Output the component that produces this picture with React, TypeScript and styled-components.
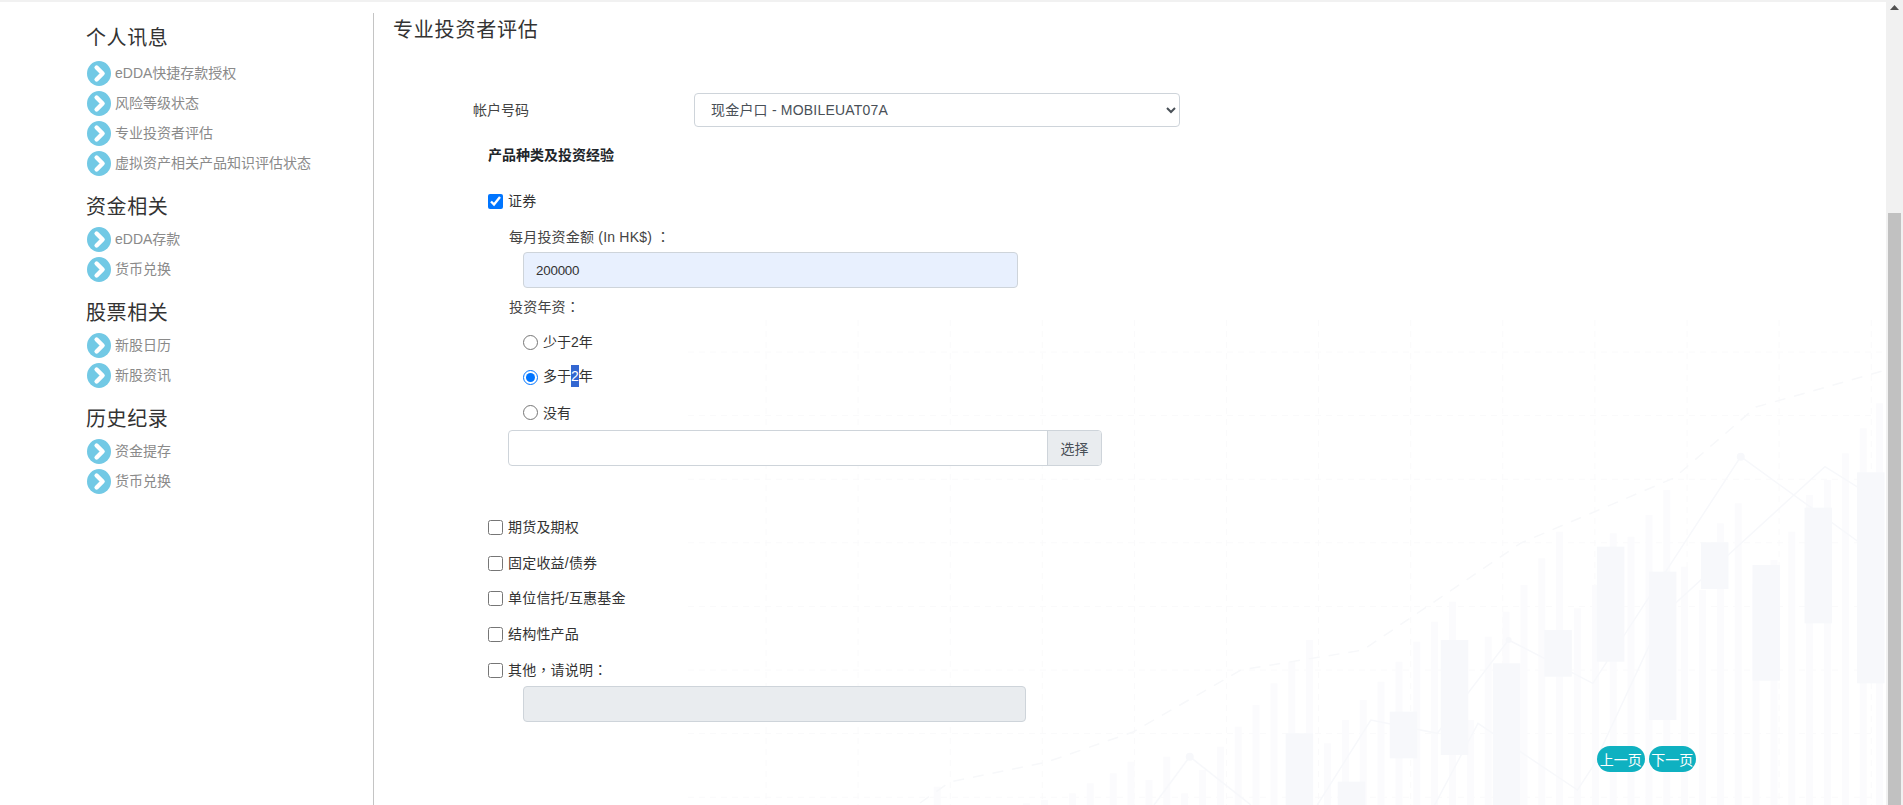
import React from "react";
import styled, { createGlobalStyle } from "styled-components";

const Global = createGlobalStyle`
  html, body { margin: 0; padding: 0; background: #fff; height: 100%; overflow: hidden; }
  * { box-sizing: border-box; }
  body { font-family: "Liberation Sans", "Noto Sans CJK SC", sans-serif; }
`;

const Page = styled.div`
  display: flex;
  width: 1903px;
  height: 805px;
  overflow: hidden;
`;
const Stage = styled.div`
  position: relative;
  flex: 1;
  min-width: 0;
  display: flex;
  flex-direction: column;
`;
const TopLine = styled.div`
  height: 2px;
  background: #f1f1f1;
  position: relative;
  z-index: 1;
`;
const Columns = styled.div`
  position: relative;
  z-index: 1;
  flex: 1;
  display: flex;
  min-height: 0;
`;
const ChartLayer = styled.svg`
  position: absolute;
  left: 0;
  top: 0;
  width: 1886px;
  height: 805px;
  pointer-events: none;
`;
const Sidebar = styled.nav`
  width: 373px;
  flex: none;
  padding: 21px 0 0 86px;
`;
const MenuHeading = styled.h3`
  margin: 0 0 3px;
  height: 30px;
  line-height: 30px;
  font-size: 20px;
  font-weight: 400;
  letter-spacing: 0.6px;
  color: #333;
`;
const MenuGroup = styled.section`
  margin-bottom: 13px;
  &:first-child {
    margin-bottom: 13.5px;
  }
  &:first-child ${MenuHeading} {
    margin-bottom: 5px;
  }
`;
const MenuItem = styled.a`
  display: flex;
  align-items: center;
  height: 30px;
  padding-left: 1px;
  gap: 4px;
  font-size: 14px;
  color: #8a8a8a;
  span {
    padding-bottom: 3px;
  }
`;
const Main = styled.main`
  flex: 1;
  margin-top: 11px;
  border-left: 1px solid #c4c4c4;
  padding-top: 2px;
`;
const Title = styled.h2`
  margin: 0 0 0 19px;
  height: 30px;
  line-height: 30px;
  font-size: 20px;
  font-weight: 400;
  letter-spacing: 0.8px;
  color: #333;
`;
const AccountRow = styled.div`
  display: flex;
  align-items: center;
  margin: 48px 0 0 99px;
  height: 34px;
`;
const AccountLabel = styled.label`
  width: 221px;
  font-size: 14px;
  color: #444;
  padding-bottom: 2px;
`;
const AccountSelect = styled.select`
  width: 486px;
  height: 34px;
  padding: 0 12px;
  font: 14px "Liberation Sans", "Noto Sans CJK SC", sans-serif;
  letter-spacing: 0.2px;
  color: #495057;
  background: #fff;
  border: 1px solid #ced4da;
  border-radius: 4px;
`;
const Form = styled.form`
  margin-left: 114px;
`;
const SectionTitle = styled.div`
  margin-top: 18px;
  height: 20px;
  line-height: 20px;
  font-size: 14px;
  font-weight: 600;
  color: #212529;
`;
const CheckRow = styled.label<{ $top?: number }>`
  display: flex;
  align-items: center;
  gap: 5px;
  height: 22px;
  margin-top: ${(p) => p.$top ?? 13.6}px;
  font-size: 14px;
  letter-spacing: 0.2px;
  color: #333;
  input {
    width: 15px;
    height: 15px;
    margin: 0;
  }
  span {
    padding-bottom: 3px;
  }
`;
const FieldLabel = styled.div<{ $top: number }>`
  margin: ${(p) => p.$top}px 0 0 21px;
  height: 20px;
  line-height: 20px;
  font-size: 14px;
  letter-spacing: 0.2px;
  color: #444;
`;
const CentredPunctuation = styled.span`
  font-family: "Noto Sans CJK TC", sans-serif;
`;
const TextField = styled.input<{ $width: number; $top: number }>`
  display: block;
  width: ${(p) => p.$width}px;
  height: 36px;
  margin: ${(p) => p.$top}px 0 0 35px;
  padding: 0 12px;
  font: 13.33px "Liberation Sans", sans-serif;
  letter-spacing: -0.2px;
  color: #333;
  border: 1px solid #ced4da;
  border-radius: 4px;
  background: ${(p) => (p.disabled ? "#e9ecef" : "#e8f0fe")};
`;
const RadioGroup = styled.div`
  margin: 16px 0 0 35px;
  display: flex;
  flex-direction: column;
  gap: 15.4px;
`;
const RadioRow = styled.label`
  display: flex;
  align-items: center;
  gap: 5px;
  height: 20px;
  font-size: 14px;
  color: #333;
  input {
    width: 15px;
    height: 15px;
    margin: 0;
  }
  span {
    padding-bottom: 2px;
  }
`;
const Selected = styled.b`
  background: #3367d1;
  color: #fff;
  font-weight: 400;
  display: inline-block;
  line-height: 22px;
`;
const FileGroup = styled.div`
  display: flex;
  width: 594px;
  height: 36px;
  margin: 7px 0 0 20px;
  border: 1px solid #ced4da;
  border-radius: 4px;
  overflow: hidden;
  background: #fff;
`;
const FileName = styled.div`
  flex: 1;
`;
const FileButton = styled.div`
  width: 54px;
  display: flex;
  align-items: center;
  justify-content: center;
  background: #e9ecef;
  border-left: 1px solid #ced4da;
  font-size: 14px;
  color: #495057;
`;
const NavRow = styled.div`
  display: flex;
  justify-content: flex-end;
  gap: 4px;
  margin-top: 24px;
  padding-right: 190px;
`;
const NavButton = styled.button`
  width: 47.5px;
  height: 26px;
  padding: 0;
  border: 0;
  border-radius: 13px;
  background: #0fb1c1;
  color: #fff;
  font: 14px "Liberation Sans", "Noto Sans CJK SC", sans-serif;
  white-space: nowrap;
`;
const ScrollTrack = styled.div`
  width: 17px;
  flex: none;
  background: #f1f1f1;
  display: flex;
  flex-direction: column;
  align-items: center;
`;
const ScrollArrow = styled.svg`
  width: 9px;
  height: 5px;
  margin-top: 5px;
`;
const ScrollThumb = styled.div`
  width: 13px;
  flex: 1;
  margin-top: 203px;
  background: #c1c1c1;
`;

const ArrowIcon = () => (
  <svg width="24" height="25" viewBox="0 0 24 25" style={{ flex: "none" }}>
    <ellipse cx="12" cy="12.5" rx="12" ry="12.5" fill="#72c9e5" />
    <path d="M9.6 6.5 L15.6 12.5 L9.6 18.5" fill="none" stroke="#fff" strokeWidth="4.4" strokeLinejoin="round" strokeLinecap="round" />
  </svg>
);

// Chart data is given in a 1.96 x 3 sampling of the region starting at (1103, 300).
const px = (x: number) => 1103 + x / 1.96;
const py = (y: number) => 300 + y / 3;
const thin: [number, number][] = [
  [-363, 1530], [-325, 1460], [-150, 1510], [-115, 1500], [-60, 1480], [-25, 1450],
  [20, 1420], [55, 1385], [90, 1440], [125, 1370], [160, 1480], [195, 1410], [230, 1340], [265, 1280], [300, 1215],
  [335, 1150], [370, 1085], [405, 1020], [440, 1330], [475, 1260], [510, 1200], [545, 1145], [580, 1085], [615, 1025],
  [650, 965], [685, 905], [720, 1260], [755, 1010], [790, 935], [825, 855], [860, 775], [895, 695], [930, 925],
  [965, 855], [1000, 700], [1035, 710], [1070, 645], [1105, 570], [1140, 800], [1175, 870], [1210, 670], [1245, 610],
  [1280, 850], [1315, 780], [1350, 695], [1385, 585], [1420, 540], [1455, 460], [1490, 385], [1522, 310],
];
const bodies: [number, number, number][] = [
  [358, 1300, 1515], [460, 1445, 1515], [562, 1235, 1375], [662, 1020, 1365], [764, 1090, 1515], [865, 990, 1130],
  [968, 740, 1085], [1070, 815, 1260], [1172, 727, 867], [1273, 795, 1142], [1375, 623, 970], [1478, 517, 1150],
];
const toPoints = (pts: [number, number][]) => pts.map(([x, y]) => `${px(x)},${py(y)}`).join(" ");

const Chart = () => {
  const vertical: number[] = [];
  for (let x = 766; x < 1886; x += 92.1) vertical.push(x);
  const horizontal: number[] = [];
  for (let y = 352; y < 805; y += 63.6) horizontal.push(y);
  return (
    <ChartLayer viewBox="0 0 1886 805">
      <g stroke="#fafafb" strokeWidth="1" strokeDasharray="6 5">
        {vertical.map((x) => <line key={x} x1={x} x2={x} y1={320} y2={805} />)}
        {horizontal.map((y) => <line key={y} x1={688} x2={1886} y1={y} y2={y} />)}
      </g>
      {thin.map(([x, y]) => (
        <rect key={x} x={px(x) - 3.5} y={py(y)} width={7} height={805 - py(y)} fill="#fbfbfd" />
      ))}
      {bodies.map(([x, a, b]) => (
        <rect key={x} x={px(x)} y={py(a)} width={27.5} height={(b - a) / 3} fill="#f7f8fb" />
      ))}
      <polyline
        points="920,803 950,782 1047,762 1133,732 1241,670 1363,650 1521,543 1674,478 1756,407 1886,370"
        fill="none" stroke="#f7f8fa" strokeWidth="1.5" strokeDasharray="11 9"
      />
      <polyline
        points={toPoints([[100, 1515], [170, 1370], [290, 1515]])}
        fill="none" stroke="#f7f8fb" strokeWidth="1.5"
      />
      <polyline
        points={toPoints([[420, 1515], [525, 1260], [655, 1300], [795, 1020], [960, 1150], [1250, 470], [1530, 780]])}
        fill="none" stroke="#f7f8fb" strokeWidth="1.5"
      />
      <polyline
        points={toPoints([[650, 1515], [735, 1270], [930, 1470], [960, 1400], [1100, 940], [1415, 500], [1530, 610]])}
        fill="none" stroke="#f7f8fb" strokeWidth="1.5"
      />
      <circle cx={px(170)} cy={py(1370)} r="4" fill="#f7f8fb" />
      <circle cx={px(1250)} cy={py(470)} r="4" fill="#f7f8fb" />
      <circle cx={px(795)} cy={py(1020)} r="3" fill="#f7f8fb" />
    </ChartLayer>
  );
};

const menu: { title: string; items: string[] }[] = [
  { title: "个人讯息", items: ["eDDA快捷存款授权", "风险等级状态", "专业投资者评估", "虚拟资产相关产品知识评估状态"] },
  { title: "资金相关", items: ["eDDA存款", "货币兑换"] },
  { title: "股票相关", items: ["新股日历", "新股资讯"] },
  { title: "历史纪录", items: ["资金提存", "货币兑换"] },
];

const otherProducts: React.ReactNode[] = [
  "期货及期权",
  "固定收益/债券",
  "单位信托/互惠基金",
  "结构性产品",
  <>其他<CentredPunctuation>，</CentredPunctuation>请说明<CentredPunctuation>：</CentredPunctuation></>,
];

export default function App() {
  return (
    <Page>
      <Global />
      <Stage>
        <Chart />
        <TopLine />
        <Columns>
          <Sidebar>
            {menu.map((group) => (
              <MenuGroup key={group.title}>
                <MenuHeading>{group.title}</MenuHeading>
                {group.items.map((item) => (
                  <MenuItem key={item}>
                    <ArrowIcon />
                    <span>{item}</span>
                  </MenuItem>
                ))}
              </MenuGroup>
            ))}
          </Sidebar>
          <Main>
            <Title>专业投资者评估</Title>
            <AccountRow>
              <AccountLabel>帐户号码</AccountLabel>
              <AccountSelect defaultValue="cash">
                <option value="cash">现金户口 - MOBILEUAT07A</option>
              </AccountSelect>
            </AccountRow>
            <Form>
              <SectionTitle>产品种类及投资经验</SectionTitle>
              <CheckRow $top={25}>
                <input type="checkbox" defaultChecked />
                <span>证券</span>
              </CheckRow>
              <FieldLabel $top={14}>每月投资金额 (In HK$) <CentredPunctuation>：</CentredPunctuation></FieldLabel>
              <TextField $width={495} $top={6} defaultValue="200000" />
              <FieldLabel $top={8}>投资年资<CentredPunctuation>：</CentredPunctuation></FieldLabel>
              <RadioGroup>
                <RadioRow>
                  <input type="radio" name="years" />
                  <span>少于2年</span>
                </RadioRow>
                <RadioRow>
                  <input type="radio" name="years" defaultChecked />
                  <span>多于<Selected>2</Selected>年</span>
                </RadioRow>
                <RadioRow>
                  <input type="radio" name="years" />
                  <span>没有</span>
                </RadioRow>
              </RadioGroup>
              <FileGroup>
                <FileName />
                <FileButton>选择</FileButton>
              </FileGroup>
              {otherProducts.map((label, i) => (
                <CheckRow key={i} $top={i === 0 ? 51 : undefined}>
                  <input type="checkbox" />
                  <span>{label}</span>
                </CheckRow>
              ))}
              <TextField $width={503} $top={5} disabled />
            </Form>
            <NavRow>
              <NavButton type="button">上一页</NavButton>
              <NavButton type="button">下一页</NavButton>
            </NavRow>
          </Main>
        </Columns>
      </Stage>
      <ScrollTrack>
        <ScrollArrow viewBox="0 0 9 5">
          <path d="M4.5 0 L9 5 L0 5 Z" fill="#505050" />
        </ScrollArrow>
        <ScrollThumb />
      </ScrollTrack>
    </Page>
  );
}
